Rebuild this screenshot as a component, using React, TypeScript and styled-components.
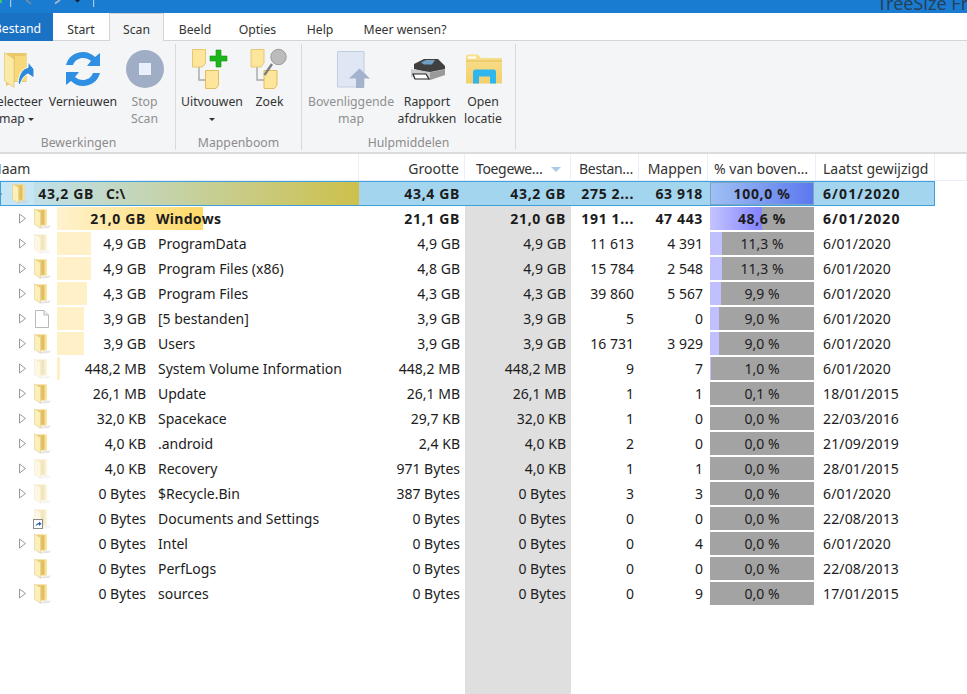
import React from "react";
import styled, { createGlobalStyle, css } from "styled-components";

const Global = createGlobalStyle`
  html, body { margin: 0; padding: 0; background: #fff; }
  body { font-family: "Noto Sans", "Open Sans", sans-serif; }
  #root { width: 967px; height: 694px; overflow: hidden; }
`;

const Page = styled.div`
  width: 967px; height: 694px; display: flex; flex-direction: column; overflow: hidden; background: #fff;
  color: #1c1c1c;
`;
const TitleBar = styled.div`
  height: 13px; flex: none; background: #1a7cd0; display: flex; align-items: flex-end; justify-content: space-between; overflow: hidden;
`;
const QuickAccess = styled.div`
  display: flex; align-items: flex-start; height: 13px; flex: none;
`;
const WindowTitle = styled.div`
  font-size: 18px; line-height: 22px; color: #25415c; white-space: nowrap; width: 90px; flex: none; overflow: hidden; margin-bottom: -1px;
`;
const TabBar = styled.div`
  height: 28px; flex: none; display: flex; align-items: stretch; background: #fff; font-size: 12.25px; box-sizing: border-box; border-bottom: 1px solid #d5d5d5;
`;
const FileTab = styled.div`
  width: 53px; flex: none; background: #1a72c4; color: #fff; box-sizing: border-box; margin-bottom: -1px; overflow: hidden; white-space: nowrap; display: flex; justify-content: flex-end; padding-right: 12px; padding-top: 5px; line-height: 22px;
`;
const Tab = styled.div<{ $active?: boolean; $w: number }>`
  width: ${p => p.$w}px; flex: none; box-sizing: border-box; text-align: center; line-height: 22px; padding-top: 6px;
  color: #333;
  ${p => p.$active ? "background:#f4f5f7;border:1px solid #d5d5d5;border-bottom:none;margin-bottom:-1px;padding-top:5px;" : ""}
`;
const Ribbon = styled.div`
  height: 113px; flex: none; background: #f4f5f7; display: flex; align-items: stretch; box-sizing: border-box; border-bottom: 2px solid #dcdcdc; padding-top: 3px; padding-bottom: 2px;
`;
const Group = styled.div<{ $w: number }>`
  width: ${p => p.$w}px; flex: none; box-sizing: border-box; border-right: 1px solid #d9d9d9; display: flex; flex-direction: column; justify-content: space-between; overflow: hidden;
`;
const GroupItems = styled.div<{ $left?: number }>`
  display: flex; margin-left: ${p => p.$left || 0}px;
`;
const GroupLabel = styled.div<{ $right?: number }>`
  text-align: center; font-size: 12.25px; line-height: 18px; height: 16px; color: #8c8c8c; padding-right: ${p => p.$right || 0}px;
`;
const RibbonButton = styled.div<{ $w: number; $muted?: boolean }>`
  width: ${p => p.$w}px; flex: none; display: flex; flex-direction: column; align-items: center; font-size: 12.25px; line-height: 17px; text-align: center;
  color: ${p => p.$muted ? "#8f8f8f" : "#333"}; white-space: nowrap;
`;
const IconSlot = styled.div`
  height: 41px; margin-top: 4px; margin-bottom: 4px; display: flex; align-items: center; justify-content: center;
`;
const Caret = styled.span`
  display: inline-block; width: 0; height: 0; border-left: 3px solid transparent; border-right: 3px solid transparent; border-top: 3px solid #333; vertical-align: 2px;
`;

const cols = "359px 106px 106px 68px 69px 108px 119px";
const Header = styled.div`
  height: 27px; flex: none; display: grid; grid-template-columns: ${cols} 32px; font-size: 14px; box-sizing: border-box; border-bottom: 1px solid #e8eefb;
`;
const HeadCell = styled.div<{ $align?: string; $pad?: number; $tight?: boolean }>`
  box-sizing: border-box; border-right: 1px solid #e8eefb; line-height: 29px; height: 26px; padding: 0 ${p => p.$pad ?? 5}px; text-align: ${p => p.$align || "left"}; white-space: nowrap; overflow: hidden; color: #333;
  letter-spacing: ${p => p.$tight ? "-.35px" : "0"};
`;
const NameHead = styled(HeadCell)`
  margin-left: -9px; padding: 0;
`;
const SortArrow = styled.span`
  display: inline-block; width: 0; height: 0; border-left: 5px solid transparent; border-right: 5px solid transparent; border-top: 5px solid #a9cbe8; margin-left: 8px; vertical-align: 2px;
`;
const Body = styled.div`
  flex: 1; display: flex; flex-direction: column; min-height: 0;
`;
const Row = styled.div<{ $root?: boolean; $bold?: boolean }>`
  height: 25px; flex: none; display: grid; grid-template-columns: ${cols}; width: 935px; box-sizing: border-box; font-size: 14px; line-height: 26px;
  font-weight: ${p => p.$bold ? 700 : 400}; color: #1c1c1c; white-space: nowrap;
  letter-spacing: ${p => p.$bold ? ".65px" : "0"};
  ${p => p.$root ? "background:#a3d5ef;outline:1px solid #3d9fdc;outline-offset:-1px;" : ""}
`;
const Filler = styled.div`
  flex: 1; display: grid; grid-template-columns: ${cols}; width: 935px;
`;
const Stripe = styled.div`
  grid-column: 3; background: #dfdfdf;
`;
const NameCell = styled.div<{ $root?: boolean }>`
  display: flex; align-items: center; overflow: hidden; height: 25px; background: ${p => p.$root ? "#c6e5f5" : "transparent"};
`;
const Expander = styled.div<{ $indent: number }>`
  width: 20px; flex: none; margin-left: ${p => p.$indent}px; display: flex; justify-content: center; align-items: center;
`;
const FolderSlot = styled.div<{ $left: number; $w: number }>`
  width: ${p => p.$w}px; height: 25px; flex: none; display: flex; align-items: center; margin-left: ${p => p.$left}px; position: relative;
`;
const Shortcut = styled.svg`
  position: absolute; left: -1px; bottom: 2px;
`;
const Label = styled.div<{ $bar?: number; $root?: boolean; $bold?: boolean }>`
  flex: 1; height: 23px; display: flex; line-height: 24px; background-repeat: no-repeat;
  ${p => p.$root
    ? css`background-image: linear-gradient(90deg, #bfe0ea, #cdc04c);`
    : css`
        background-image: ${p.$bold ? "linear-gradient(90deg,#fff3cf,#ffd966)" : "linear-gradient(90deg,#fff0c8,#fff0c8)"};
        background-size: ${p.$bar}px 100%;
      `}
`;
const SizeText = styled.div<{ $w: number }>`
  width: ${p => p.$w}px; flex: none; text-align: right;
`;
const NameText = styled.div<{ $gap: number; $bold?: boolean }>`
  margin-left: ${p => p.$gap}px;
  letter-spacing: ${p => p.$bold ? ".3px" : "0"};
`;
const Num = styled.div<{ $stripe?: boolean }>`
  text-align: right; padding-right: 5px; overflow: hidden; box-sizing: border-box; height: 25px;
  ${p => p.$stripe ? "background:#dfdfdf;" : ""}
`;
const BarCell = styled.div`
  padding: 1px 2px; box-sizing: border-box; display: flex; height: 25px;
`;
const Track = styled.div<{ $root?: boolean; $bold?: boolean; $w?: number }>`
  flex: 1; height: 23px; text-align: center; line-height: 24px; background-repeat: no-repeat; box-sizing: border-box;
  ${p => p.$root
    ? css`background-color: #a3d5ef; background-image: linear-gradient(90deg, #9fc0f3, #5c78ef); border: 1px solid #7fa5c0; line-height: 22px;`
    : css`
        background-color: #a3a3a3;
        background-image: ${p.$bold ? "linear-gradient(90deg,#c4c4ff,#8282ff)" : "linear-gradient(90deg,#c0c0ff,#c0c0ff)"};
        background-size: ${p.$w}px 100%;
      `}
`;
const DateCell = styled.div<{ $bold?: boolean }>`
  padding-left: 7px; height: 25px; overflow: hidden;
  letter-spacing: ${p => p.$bold ? "1.1px" : ".15px"};
`;
const FolderSvg = styled.svg<{ $faded?: boolean }>`
  flex: none; opacity: ${p => p.$faded ? 0.4 : 1};
`;

const FolderIcon = ({ faded }: { faded?: boolean }) => (
  <FolderSvg $faded={faded} width="17" height="21" viewBox="0 0 17 21">
    <path d="M4 19 L17 17.5 L15 20 L6 20.5Z" fill="#cfcfcf" opacity=".55" />
    <path d="M2 1.5 H12.5 V17.5 H6 Z" fill="#ecce72" />
    <path d="M7.5 2.5 H11 V16.5 H7.5Z" fill="#e0bd60" />
    <path d="M10.5 2 H12.5 V17 H10.5Z" fill="#f8e296" />
    <path d="M0.5 1 L6.5 4.5 V20 L0.5 16.5Z" fill="#fbefbb" stroke="#e6cd85" strokeWidth=".6" />
  </FolderSvg>
);
const FileIcon = () => (
  <svg width="16" height="20" viewBox="0 0 16 20" style={{ flex: "none" }}>
    <path d="M1.5 1.5 H10 L14.5 6 V18.5 H1.5Z" fill="#fff" stroke="#b9b9b9" />
    <path d="M10 1.5 V6 H14.5" fill="#eee" stroke="#b9b9b9" />
  </svg>
);
const Chevron = () => (
  <svg width="9" height="11" viewBox="0 0 9 11"><path d="M1.5 1 L7.5 5.5 L1.5 10Z" fill="#fff" stroke="#9a9a9a" /></svg>
);

const OpenFolder = () => (
  <svg width="42" height="38" viewBox="0 0 42 38">
    <path d="M10 3 H30.5 V32 H18 L10 36Z" fill="#e9c86a" />
    <path d="M8.5 2.5 L18 9 V37.5 L8.5 31Z" fill="#fbe9a6" stroke="#e5cb84" strokeWidth=".8" />
    <path d="M19 6 H30.5 V31 H19Z" fill="#f7d97c" />
    <path d="M22 33 C23 23 27 18.5 32 17.5 V12 L38 19 V28 L32 24 C29 25 26 28 24 35Z" fill="#2c88db" stroke="#fff" strokeWidth="1" />
  </svg>
);
const Refresh = () => (
  <svg width="38" height="38" viewBox="0 0 38 38">
    <path d="M2 15 C4 7 11 2 19 2 C24 2 28 4 31 7 L36 3 V16 H23 L27 11 C25 9 22 8 19 8 C15 8 11 10 9 15Z" fill="#2f8fe3" />
    <path d="M36 23 C34 31 27 36 19 36 C14 36 10 34 7 31 L2 35 V22 H15 L11 27 C13 29 16 30 19 30 C23 30 27 28 29 23Z" fill="#2f8fe3" />
  </svg>
);
const StopIcon = () => (
  <svg width="38" height="38" viewBox="0 0 38 38">
    <circle cx="19" cy="19" r="19" fill="#9fadc5" />
    <rect x="13" y="13" width="12" height="12" fill="#e8f0fb" />
  </svg>
);
const ExpandIcon = () => (
  <svg width="40" height="41" viewBox="0 0 40 41">
    <path d="M7 19 V32 H13" fill="none" stroke="#a8a8a8" strokeWidth="1.4" />
    <path d="M.5 1.5 H13.5 V15 L10.5 19 H.5Z" fill="#fde69b" stroke="#e6c871" />
    <path d="M13.5 22.5 H26.5 V37 L24 40.5 H13.5Z" fill="#fde69b" stroke="#e0bd5f" />
    <path d="M24 2 H29 V8 H35 V13 H29 V19 H24 V13 H18 V8 H24Z" fill="#1cb51c" stroke="#149614" strokeWidth=".6" />
  </svg>
);
const SearchTreeIcon = () => (
  <svg width="40" height="41" viewBox="0 0 40 41">
    <path d="M7 19 V32 H14" fill="none" stroke="#a8a8a8" strokeWidth="1.4" />
    <path d="M1 1.5 H14 V15 L11 19 H1Z" fill="#fde69b" stroke="#e6c871" />
    <path d="M14 22.5 H27 V37 L24.5 40.5 H14Z" fill="#fde69b" stroke="#e0bd5f" />
    <line x1="14.5" y1="27" x2="22" y2="16" stroke="#7e7e7e" strokeWidth="2.4" />
    <circle cx="28.5" cy="9" r="7.7" fill="#bcbcbc" stroke="#9a9a9a" />
  </svg>
);
const UpIcon = () => (
  <svg width="40" height="38" viewBox="0 0 40 38">
    <path d="M6.5 1.5 H33 V37 H6.5Z" fill="#dfe7f4" stroke="#c2cde0" />
    <path d="M28.5 18.5 L39 28.5 H33 V38 H25 V28.5 H18Z" fill="#a4b3cd" />
  </svg>
);
const PrinterIcon = () => (
  <svg width="38" height="32" viewBox="0 0 38 32">
    <path d="M6 11 L16 6 H30 L37 13 V18 L22 20 L6 16Z" fill="#404040" />
    <path d="M13 9.5 L18 7 H27 L24 11.5 H16Z" fill="#6f9fc4" />
    <path d="M3 16 L22 19 L37 16 V22 L22 27 L3 24Z" fill="#cdcdcd" />
    <path d="M22 19.5 L37 16.5 V22 L22 27Z" fill="#9a9a9a" />
    <path d="M5 21 H18 L21 26 H7Z" fill="#fff" stroke="#222" strokeWidth="1.2" />
  </svg>
);
const ExplorerIcon = () => (
  <svg width="38" height="32" viewBox="0 0 38 32">
    <defs>
      <linearGradient id="exf" x1="0" y1="0" x2="0" y2="1">
        <stop offset="0" stopColor="#f9e08e" />
        <stop offset="1" stopColor="#f3cf6c" />
      </linearGradient>
    </defs>
    <path d="M2 3 Q2 1.5 3.5 1.5 H14 L17 5 H36.5 Q38 5 38 6.5 V30.5 H2Z" fill="url(#exf)" />
    <path d="M2 8 H38" stroke="#e3bb58" />
    <rect x="4" y="3.5" width="8" height="2" fill="#fff" />
    <path d="M9 30.5 V19 Q9 16.5 11.5 16.5 H29.5 Q32 16.5 32 19 V30.5 H26 V23.5 H15 V30.5Z" fill="#2fb6ee" />
  </svg>
);

type R = { size: string; name: string; bar: number; g: string; a: string; f: string; m: string; p: string; w: number; d: string; exp?: boolean; faded?: boolean; file?: boolean; link?: boolean; bold?: boolean };
const rows: R[] = [
  { size: "21,0 GB", name: "Windows", bar: 146, g: "21,1 GB", a: "21,0 GB", f: "191 1...", m: "47 443", p: "48,6 %", w: 52, d: "6/01/2020", exp: true, bold: true },
  { size: "4,9 GB", name: "ProgramData", bar: 34, g: "4,9 GB", a: "4,9 GB", f: "11 613", m: "4 391", p: "11,3 %", w: 12, d: "6/01/2020", exp: true, faded: true },
  { size: "4,9 GB", name: "Program Files (x86)", bar: 34, g: "4,8 GB", a: "4,9 GB", f: "15 784", m: "2 548", p: "11,3 %", w: 12, d: "6/01/2020", exp: true },
  { size: "4,3 GB", name: "Program Files", bar: 30, g: "4,3 GB", a: "4,3 GB", f: "39 860", m: "5 567", p: "9,9 %", w: 11, d: "6/01/2020", exp: true },
  { size: "3,9 GB", name: "[5 bestanden]", bar: 27, g: "3,9 GB", a: "3,9 GB", f: "5", m: "0", p: "9,0 %", w: 9, d: "6/01/2020", exp: true, file: true },
  { size: "3,9 GB", name: "Users", bar: 27, g: "3,9 GB", a: "3,9 GB", f: "16 731", m: "3 929", p: "9,0 %", w: 9, d: "6/01/2020", exp: true },
  { size: "448,2 MB", name: "System Volume Information", bar: 3, g: "448,2 MB", a: "448,2 MB", f: "9", m: "7", p: "1,0 %", w: 1, d: "6/01/2020", exp: true, faded: true },
  { size: "26,1 MB", name: "Update", bar: 0, g: "26,1 MB", a: "26,1 MB", f: "1", m: "1", p: "0,1 %", w: 0, d: "18/01/2015", exp: true },
  { size: "32,0 KB", name: "Spacekace", bar: 0, g: "29,7 KB", a: "32,0 KB", f: "1", m: "0", p: "0,0 %", w: 0, d: "22/03/2016", exp: true },
  { size: "4,0 KB", name: ".android", bar: 0, g: "2,4 KB", a: "4,0 KB", f: "2", m: "0", p: "0,0 %", w: 0, d: "21/09/2019", exp: true },
  { size: "4,0 KB", name: "Recovery", bar: 0, g: "971 Bytes", a: "4,0 KB", f: "1", m: "1", p: "0,0 %", w: 0, d: "28/01/2015", exp: true, faded: true },
  { size: "0 Bytes", name: "$Recycle.Bin", bar: 0, g: "387 Bytes", a: "0 Bytes", f: "3", m: "3", p: "0,0 %", w: 0, d: "6/01/2020", exp: true, faded: true },
  { size: "0 Bytes", name: "Documents and Settings", bar: 0, g: "0 Bytes", a: "0 Bytes", f: "0", m: "0", p: "0,0 %", w: 0, d: "22/08/2013", faded: true, link: true },
  { size: "0 Bytes", name: "Intel", bar: 0, g: "0 Bytes", a: "0 Bytes", f: "0", m: "4", p: "0,0 %", w: 0, d: "6/01/2020", exp: true },
  { size: "0 Bytes", name: "PerfLogs", bar: 0, g: "0 Bytes", a: "0 Bytes", f: "0", m: "0", p: "0,0 %", w: 0, d: "22/08/2013" },
  { size: "0 Bytes", name: "sources", bar: 0, g: "0 Bytes", a: "0 Bytes", f: "0", m: "9", p: "0,0 %", w: 0, d: "17/01/2015", exp: true },
];

export default function App() {
  return (
    <Page>
      <Global />
      <TitleBar>
        <QuickAccess>
          <svg width="100" height="13" viewBox="0 0 100 13">
            <rect x="0" y="0" width="2" height="3" fill="#3cc46c" />
            <rect x="10" y="0" width="1.2" height="7" fill="#a9c6e4" />
            <path d="M26 0 L31 4" stroke="#7f8f9f" strokeWidth="1.6" />
            <path d="M55 3.5 L60 0" stroke="#b0bccb" strokeWidth="1.6" />
            <path d="M75 0 H80 L77.5 2.5Z" fill="#0d1d30" />
            <rect x="93" y="0" width="1.2" height="7" fill="#a9c6e4" />
          </svg>
        </QuickAccess>
        <WindowTitle>TreeSize Free</WindowTitle>
      </TitleBar>
      <TabBar>
        <FileTab>Bestand</FileTab>
        <Tab $w={56}>Start</Tab>
        <Tab $w={55} $active>Scan</Tab>
        <Tab $w={62}>Beeld</Tab>
        <Tab $w={63}>Opties</Tab>
        <Tab $w={62}>Help</Tab>
        <Tab $w={108}>Meer wensen?</Tab>
      </TabBar>
      <Ribbon>
        <Group $w={176}>
          <GroupItems $left={-16}>
            <RibbonButton $w={65}>
              <IconSlot><OpenFolder /></IconSlot>
              <span>Selecteer</span>
              <span>map <Caret /></span>
            </RibbonButton>
            <RibbonButton $w={68}>
              <IconSlot><Refresh /></IconSlot>
              <span>Vernieuwen</span>
            </RibbonButton>
            <RibbonButton $w={55} $muted>
              <IconSlot><StopIcon /></IconSlot>
              <span>Stop</span>
              <span>Scan</span>
            </RibbonButton>
          </GroupItems>
          <GroupLabel $right={18}>Bewerkingen</GroupLabel>
        </Group>
        <Group $w={126}>
          <GroupItems $left={3}>
            <RibbonButton $w={66}>
              <IconSlot><ExpandIcon /></IconSlot>
              <span>Uitvouwen</span>
              <span><Caret /></span>
            </RibbonButton>
            <RibbonButton $w={49}>
              <IconSlot><SearchTreeIcon /></IconSlot>
              <span>Zoek</span>
            </RibbonButton>
          </GroupItems>
          <GroupLabel>Mappenboom</GroupLabel>
        </Group>
        <Group $w={214}>
          <GroupItems $left={4}>
            <RibbonButton $w={90} $muted>
              <IconSlot><UpIcon /></IconSlot>
              <span>Bovenliggende</span>
              <span>map</span>
            </RibbonButton>
            <RibbonButton $w={62}>
              <IconSlot><PrinterIcon /></IconSlot>
              <span>Rapport</span>
              <span>afdrukken</span>
            </RibbonButton>
            <RibbonButton $w={50}>
              <IconSlot><ExplorerIcon /></IconSlot>
              <span>Open</span>
              <span>locatie</span>
            </RibbonButton>
          </GroupItems>
          <GroupLabel>Hulpmiddelen</GroupLabel>
        </Group>
      </Ribbon>
      <Header>
        <NameHead>Naam</NameHead>
        <HeadCell $align="right">Grootte</HeadCell>
        <HeadCell $pad={11} $tight>Toegewe…<SortArrow /></HeadCell>
        <HeadCell $align="right" $tight>Bestan…</HeadCell>
        <HeadCell $align="right">Mappen</HeadCell>
        <HeadCell $pad={6}>% van boven…</HeadCell>
        <HeadCell $pad={7}>Laatst gewijzigd</HeadCell>
        <HeadCell />
      </Header>
      <Body>
        <Row $root $bold>
          <NameCell $root>
            <Expander $indent={-10}><svg width="6" height="8" viewBox="0 0 6 8"><path d="M0 0 L5 4 L0 8Z" fill="#333" /></svg></Expander>
            <FolderSlot $left={2} $w={22}><FolderIcon /></FolderSlot>
            <Label $root>
              <SizeText $w={60}>43,2 GB</SizeText>
              <NameText $gap={12} $bold>C:\</NameText>
            </Label>
          </NameCell>
          <Num>43,4 GB</Num>
          <Num>43,2 GB</Num>
          <Num>275 2...</Num>
          <Num>63 918</Num>
          <BarCell><Track $root>100,0 %</Track></BarCell>
          <DateCell $bold>6/01/2020</DateCell>
        </Row>
        {rows.map(r => (
          <Row key={r.name} $bold={r.bold}>
            <NameCell>
              <Expander $indent={12}>{r.exp && <Chevron />}</Expander>
              <FolderSlot $left={2} $w={23}>
                {r.file ? <FileIcon /> : <FolderIcon faded={r.faded} />}
                {r.link && (
                  <Shortcut width="10" height="10" viewBox="0 0 10 10">
                    <rect x=".5" y=".5" width="9" height="9" fill="#fff" stroke="#8a8a8a" />
                    <path d="M2.5 7.5 C3 5 4.5 4 6 4 V2.5 L8.5 4.8 L6 7 V5.5 C5 5.5 3.5 6 2.5 7.5Z" fill="#1f5fb0" />
                  </Shortcut>
                )}
              </FolderSlot>
              <Label $bar={r.bar} $bold={r.bold}>
                <SizeText $w={89}>{r.size}</SizeText>
                <NameText $gap={r.bold ? 10 : 12} $bold={r.bold}>{r.name}</NameText>
              </Label>
            </NameCell>
            <Num>{r.g}</Num>
            <Num $stripe>{r.a}</Num>
            <Num>{r.f}</Num>
            <Num>{r.m}</Num>
            <BarCell><Track $bold={r.bold} $w={r.w}>{r.p}</Track></BarCell>
            <DateCell $bold={r.bold}>{r.d}</DateCell>
          </Row>
        ))}
        <Filler><Stripe /></Filler>
      </Body>
    </Page>
  );
}
